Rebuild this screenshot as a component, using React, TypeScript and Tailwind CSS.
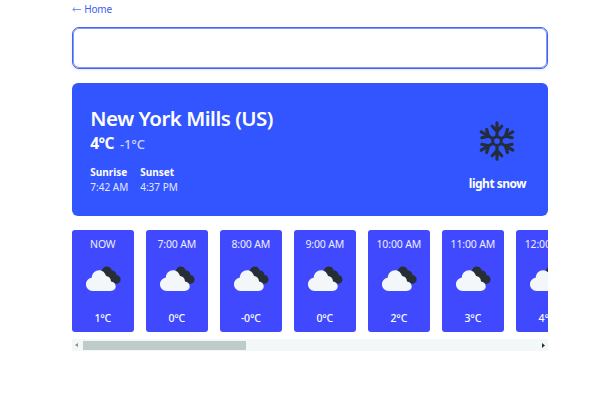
const hours = [
  { time: 'NOW', temp: '1°C' },
  { time: '7:00 AM', temp: '0°C' },
  { time: '8:00 AM', temp: '-0°C' },
  { time: '9:00 AM', temp: '0°C' },
  { time: '10:00 AM', temp: '2°C' },
  { time: '11:00 AM', temp: '3°C' },
  { time: '12:00 PM', temp: '4°C' },
];

function Snowflake() {
  return (
    <svg className="h-10 w-10" viewBox="-20 -20 40 40" fill="none" stroke="#232d3c" strokeWidth="3.100" strokeLinecap="round" strokeLinejoin="round">
      {[0, 60, 120, 180, 240, 300].map((angle) => (
        <path key={angle} transform={`rotate(${angle})`} d="M0-5V-18.200M-4.800-14.800 0-9.600 4.800-14.800" />
      ))}
      <circle r="4.300" strokeWidth="2.900" />
    </svg>
  );
}

function Clouds() {
  return (
    <svg className="h-[26px] w-9" viewBox="0 0 36 26">
      <path fill="#272f36" d="M15.500 6C16 2.400 18 .4 20.700.4c2.700 0 4.400 1.500 5.200 4.200 2.500-.1 4.300 1.600 4.700 4.300 2.400.4 4 2.300 4 4.500 0 2.500-1.900 4.300-4.500 4.300h-4L15.500 10Z" />
      <path fill="#f4f7f9" d="M6.600 25h18c3 0 5.100-2 5.100-4.700s-2-4.600-4.700-4.900c-.3-3.300-2.200-5.200-5-5.300C19.100 6.500 16.500 4.300 13.100 4.300c-4 0-7 2.900-7.400 7.500C2.200 12.400 0 15 0 18.300 0 22.100 2.900 25 6.600 25Z" />
    </svg>
  );
}

export default function App() {
  return (
    <main className="h-[400px] w-[600px] overflow-hidden bg-white pl-[72.300px] font-['Noto_Sans',sans-serif] text-white">
      <div className="w-[475.300px]">
        <a className="flex h-[27px] gap-[3px] pt-[2px] text-[10px] leading-[15px] text-[#3f5bf5]">
          <svg className="mt-[5px] h-[5px] w-[9px]" viewBox="0 0 9 5" fill="none" stroke="#5a72f7" strokeWidth=".8"><path d="M9 2.500H.8M3 .5.8 2.500 3 4.500" /></svg>
          <span className="tracking-[-0.200px]">Home</span>
        </a>
        <input aria-label="Search for a city" className="block h-[42px] w-full rounded-[7px] border border-[#4564f3] bg-white shadow-[inset_0_0_0_1px_#8499f8,0_1px_3px_#0000001c] outline-none" />
        <section className="mt-[14px] flex h-[133px] justify-between rounded-md bg-[#3355ff] pl-[18px] pr-[21.500px]">
          <div className="whitespace-nowrap">
            <h1 className="mt-[21px] text-[20.500px] leading-[28px] font-semibold tracking-[-0.500px]">New York Mills (US)</h1>
            <div className="flex h-6 items-center gap-[6px]">
              <span className="text-[15.500px] font-bold tracking-[-0.600px]">4°C</span>
              <span className="pt-[2px] text-[13px] font-medium tracking-[-0.100px] text-[#cbd4ff]">-1°C</span>
            </div>
            <div className="mt-[9px] flex gap-3 text-[10px] leading-[15px]">
              <div><div className="font-bold">Sunrise</div><div className="text-[#e5e9ff]">7:42 AM</div></div>
              <div><div className="font-bold">Sunset</div><div className="text-[#e5e9ff]">4:37 PM</div></div>
            </div>
          </div>
          <div className="flex flex-col items-center pt-[38px]">
            <Snowflake />
            <div className="mt-[14px] whitespace-nowrap text-[12px] leading-[18px] font-bold tracking-[-0.500px]">light snow</div>
          </div>
        </section>
        <section className="mt-[14px] flex gap-[12.080px] overflow-hidden">
          {hours.map(({ time, temp }) => (
            <article key={time} className="flex h-[102px] w-[61.950px] shrink-0 flex-col items-center rounded-[3px] bg-[#4149ff] pt-[6px] whitespace-nowrap">
              <div className="-ml-px text-[10.500px] leading-4 tracking-[-0.150px] text-[#edeeff]">{time}</div>
              <div className="mt-[14px] pl-px"><Clouds /></div>
              <div className="mt-[18px] -ml-px text-[10.500px] leading-4 font-medium tracking-[-0.200px]">{temp}</div>
            </article>
          ))}
        </section>
        <div className="mt-[7px] flex h-[12px] items-center bg-[#f4f7f8] px-[3px]">
          <svg className="h-1 w-[3px]" viewBox="0 0 3 4"><path d="M3 0v4L0 2Z" fill="#829397" /></svg>
          <div className="ml-[4.500px] h-[9px] w-[163.500px] bg-[#becbcb]" />
          <svg className="ml-auto h-[5px] w-[3px]" viewBox="0 0 3 5"><path d="M0 0v5l3-2.500Z" fill="#26373c" /></svg>
        </div>
      </div>
    </main>
  );
}
